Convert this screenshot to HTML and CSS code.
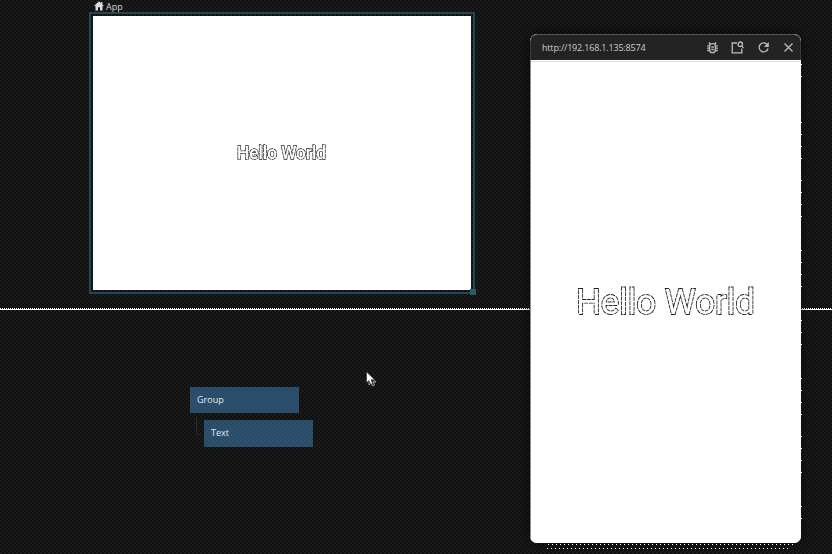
FILE: index.html
```html
<!DOCTYPE html>
<html lang="en">
<head>
<meta charset="utf-8">
<title>App</title>
<link rel="stylesheet" href="styles.css">
</head>
<body>
<main class="editor">
  <section class="preview">
    <div class="preview-label">
      <svg class="home" viewBox="0 0 10 10"><path d="M5 .3 0 5h1.5v4.5H4V6.3h2v3.2h2.5V5H10L8.4 3.5V1H7.1v1.3z"/></svg>
      <span>App</span>
    </div>
    <div class="frame">
      <div class="page">
        <svg class="hello" width="94" height="24"><text x="2" y="18" textLength="89" lengthAdjust="spacingAndGlyphs">Hello World</text></svg>
      </div>
      <i class="handle"></i>
    </div>
  </section>
  <section class="nodes">
    <div class="node node-group">Group</div>
    <svg class="link" width="8" height="20"><path d="M1.500 0v17.500H6"/></svg>
    <div class="node node-text">Text</div>
    <svg class="cursor" width="12" height="17" viewBox="0 0 12 17"><path class="echo" d="M3 4v10l2-2 1.500 3 2-1-1.500-3H10z"/><path class="arrow" d="M.5.8v11l2.500-2.300 1.600 3.700 2-.8L5 8.800h3.500z"/></svg>
  </section>
</main>
<aside class="device">
  <header class="bar">
    <span class="url">http://192.168.1.135:8574</span>
    <svg class="icon" viewBox="0 0 13 13"><path d="M3.700 4.500Q3.700 2.700 6.500 2.700T9.300 4.500V9Q9.300 11.700 6.500 11.700T3.700 9zM4.100 3 2.900 1.500M8.900 3l1.200-1.500M3.700 4.800H1.200M3.700 7.200H1M3.700 9.500H1.200M9.300 4.800h2.500M9.300 7.200H12M9.300 9.500h2.500M5.300 6h2.400M5.300 8.500h2.400"/></svg>
    <svg class="icon" viewBox="0 0 13 13"><path d="M6 2H1.200v9.800h9.600V7.500M10.800 5.200l1.700 1.700"/><circle cx="9.300" cy="3.200" r="2.200"/></svg>
    <svg class="icon reload" viewBox="0 0 13 13"><path d="M10.300 3.800A4.500 4.500 0 1 0 11 7.500"/><path class="solid" d="M11.800 1v5H6.900z"/></svg>
    <svg class="icon close" viewBox="0 0 13 13"><path d="m2.500 2.500 8 8m0-8-8 8"/></svg>
  </header>
  <div class="screen">
    <svg class="hello hello-large" width="184" height="46"><text x="2" y="35" textLength="179" lengthAdjust="spacingAndGlyphs">Hello World</text></svg>
  </div>
</aside>
<svg class="specks" width="832" height="554"><path d="M548 544.500H794M547 548.500H788"/><path class="side" d="M801.500 64v16M801.500 122v40M801.500 180v40M801.500 250v40M801.500 320v28M801.500 378v40M801.500 436v40M801.500 506v16"/></svg>
</body>
</html>
```
FILE: styles.css
```css
* { box-sizing: border-box; }
body {
  margin: 0;
  width: 832px;
  height: 554px;
  overflow: hidden;
  position: relative;
  font-family: "Open Sans", "Noto Sans", sans-serif;
  background: #191919 repeating-conic-gradient(#101010 0 25%, #1b1b1b 0 50%) 0 0 / 4px 4px;
}
svg { display: block; flex: none; }
.editor { height: 554px; display: flex; flex-direction: column; }
.preview { height: 310px; padding-left: 89px; position: relative; border-bottom: 1px solid #fff; }
.preview::after {
  content: "";
  position: absolute;
  left: 0;
  right: 0;
  bottom: 0;
  height: 1px;
  background: repeating-linear-gradient(90deg, #fff 0 1px, #000 1px 2px);
}
.preview-label {
  height: 12px;
  padding-left: 5px;
  display: flex;
  align-items: center;
  gap: 2px;
  color: #d5d5d5;
  font-size: 9px;
  font-weight: 500;
  line-height: 12px;
}
.preview-label span { padding-top: 1px; }
.home { width: 10px; height: 10px; fill: #ddd; }
.frame {
  width: 386px;
  height: 282px;
  padding: 2px;
  border: 2px solid #214654;
  position: relative;
}
.page { width: 378px; height: 274px; background: #fff; display: flex; align-items: center; justify-content: center; }
.handle { position: absolute; right: -3px; bottom: -3px; width: 6px; height: 6px; background: #285a70; }
.hello {
  font: 500 17.500px Roboto, sans-serif;
  fill: #fff;
  stroke: #222;
  stroke-width: 1.500px;
  stroke-dasharray: 4 .6;
  paint-order: stroke;
  will-change: transform;
}
.hello-large { font-size: 35px; font-weight: 400; stroke-width: 1.800px; stroke-dasharray: 4 .8; }
.nodes { flex: 1; position: relative; }
.node {
  position: absolute;
  width: 109px;
  height: 26px;
  padding-left: 7px;
  line-height: 25px;
  font-size: 9px;
  font-weight: 500;
  color: #e3ebf0;
  background: repeating-conic-gradient(#294b66 0 25%, #2b5070 0 50%) 0 0 / 4px 4px;
}
.node-group { left: 190px; top: 77px; }
.node-text { left: 204px; top: 110px; height: 27px; line-height: 26px; }
.link { position: absolute; left: 195px; top: 107px; fill: none; stroke: #2b2b2b; }
.cursor { position: absolute; left: 366px; top: 61px; }
.arrow { fill: #fff; stroke: #111; stroke-width: .5px; }
.echo { fill: #333; stroke: #bbb; stroke-width: .8px; }
.device {
  position: absolute;
  left: 530px;
  top: 34px;
  width: 271px;
  height: 509px;
  border-radius: 7px;
  overflow: hidden;
  background: #fff;
  box-shadow: 0 0 14px #0008;
  display: flex;
  flex-direction: column;
}
.bar {
  height: 26px;
  padding: 0 5px 0 12px;
  border: 1px solid #3b3b3b;
  border-top-color: #555;
  border-bottom: 0;
  border-radius: 7px 7px 0 0;
  background: repeating-conic-gradient(#202020 0 25%, #262626 0 50%) 0 0 / 4px 4px;
  display: flex;
  align-items: center;
  gap: 12.500px;
}
.url { flex: 1; margin-left: -1px; font-size: 9px; font-weight: 500; letter-spacing: -.18px; color: #ccc; white-space: nowrap; }
.icon { width: 13px; height: 13px; fill: none; stroke: #bbb; stroke-width: 1.300px; }
.icon .solid { fill: #bbb; stroke: none; }
.screen {
  flex: 1;
  border-left: 1px solid #8c8c8c;
  background: linear-gradient(#fff 1px, #ddd 1px 2px, #fff 2px);
  display: flex;
  align-items: center;
  justify-content: center;
}
.specks { position: absolute; left: 0; top: 0; fill: none; stroke: #fff; stroke-dasharray: 1 3; pointer-events: none; }
.specks .side { stroke-dasharray: 1 11; }
```
